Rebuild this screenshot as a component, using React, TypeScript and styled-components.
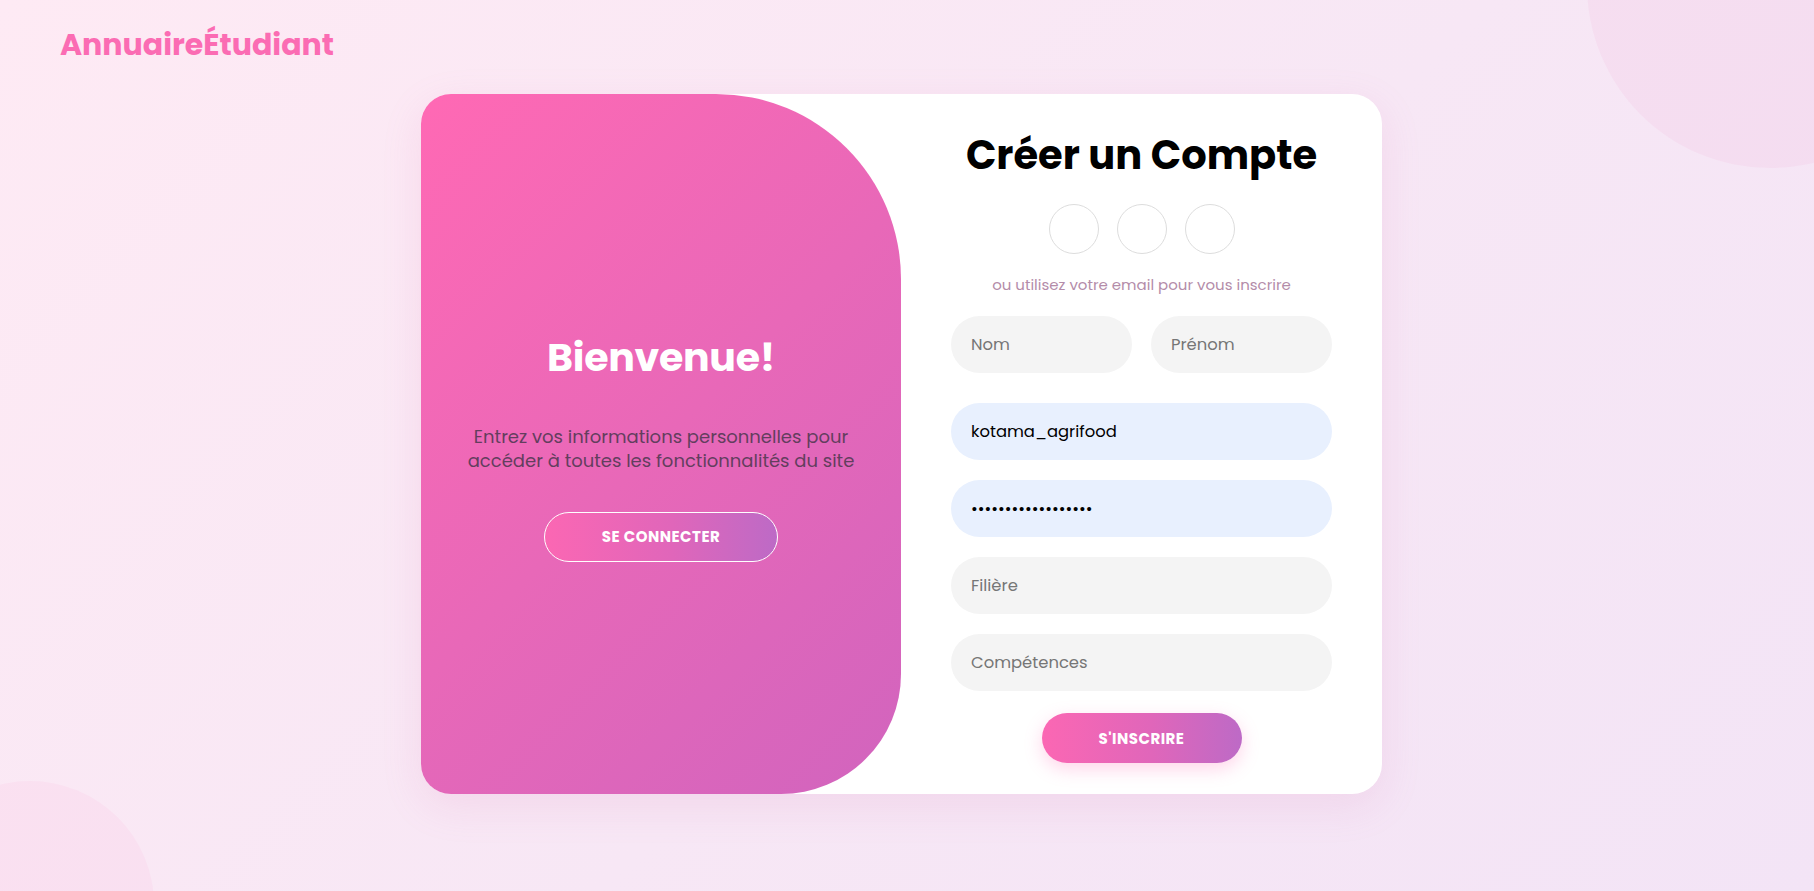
import React from "react";
import styled, { createGlobalStyle } from "styled-components";

const GlobalStyle = createGlobalStyle`
  * { box-sizing: border-box; }
  html, body {
    margin: 0;
    padding: 0;
    height: 100%;
  }
  body {
    font-family: "Poppins", "Inter", "Noto Sans", sans-serif;
    background: linear-gradient(135deg, #feeaf4 0%, #f7e7f5 55%, #f3e4f6 100%);
    overflow: hidden;
  }
`;

const Page = styled.div`
  position: relative;
  height: 100vh;
  display: flex;
  flex-direction: column;
  overflow: hidden;
`;

const Blob = styled.div<{ $size: number; $tint: string }>`
  position: absolute;
  width: ${(p) => p.$size}px;
  height: ${(p) => p.$size}px;
  border-radius: 50%;
  background: ${(p) => p.$tint};
  pointer-events: none;
`;

const BlobTopRight = styled(Blob)`
  left: 1587px;
  top: -198px;
`;

const BlobBottomLeft = styled(Blob)`
  left: -94px;
  top: 781px;
`;

const Header = styled.header`
  position: relative;
  padding: 22px 60px 0;
  height: 64px;
`;

const Logo = styled.div`
  font-size: 30px;
  font-weight: 700;
  color: #fb6cb3;
  line-height: 45px;
`;

const Main = styled.main`
  position: relative;
  display: flex;
  justify-content: center;
  padding: 30px 11px 0 0;
`;

const Card = styled.div`
  width: 961px;
  height: 700px;
  background: #ffffff;
  border-radius: 30px;
  overflow: hidden;
  display: grid;
  grid-template-columns: 480px 1fr;
  box-shadow: 0 12px 40px rgba(220, 110, 180, 0.14);
`;

const WelcomePanel = styled.section`
  background: linear-gradient(135deg, #ff69b4 0%, #e868b8 50%, #d164be 100%);
  border-radius: 0 185px 120px 0;
  display: flex;
  flex-direction: column;
  align-items: center;
  justify-content: center;
  text-align: center;
  padding: 7px 20px 0;
`;

const WelcomeTitle = styled.h1`
  margin: 0;
  font-size: 39.5px;
  line-height: 48px;
  font-weight: 700;
  color: #ffffff;
  letter-spacing: -0.3px;
`;

const WelcomeText = styled.p`
  margin: 43px 0 0;
  font-size: 18px;
  line-height: 24px;
  color: #633e5e;
`;

const GhostButton = styled.button`
  margin-top: 39px;
  width: 234px;
  height: 50px;
  border-radius: 25px;
  border: 1px solid #ffffff;
  background: linear-gradient(90deg, #fb67b3 0%, #e066ba 55%, #bd6ac6 100%);
  color: #ffffff;
  font-family: inherit;
  font-size: 15px;
  font-weight: 700;
  letter-spacing: 0.5px;
  text-transform: uppercase;
  cursor: pointer;
`;

const FormPanel = styled.form`
  display: flex;
  flex-direction: column;
  align-items: center;
  justify-content: center;
  padding: 5px 50px 0;
`;

const FormTitle = styled.h2`
  margin: 0;
  font-size: 40px;
  line-height: 50px;
  font-weight: 700;
  color: #000000;
`;

const SocialRow = styled.div`
  margin-top: 24px;
  display: flex;
  gap: 18px;
`;

const SocialCircle = styled.a`
  width: 50px;
  height: 50px;
  border-radius: 50%;
  border: 1px solid #dddddd;
  display: block;
`;

const Hint = styled.span`
  margin-top: 21px;
  font-size: 15px;
  line-height: 20px;
  color: #b48ca9;
`;

const FieldRow = styled.div`
  margin-top: 21px;
  width: 100%;
  display: grid;
  grid-template-columns: 1fr 1fr;
  gap: 19px;
`;

const FieldStack = styled.div`
  margin-top: 30px;
  width: 100%;
  display: flex;
  flex-direction: column;
  gap: 20px;
`;

const Field = styled.input<{ $filled?: boolean }>`
  width: 100%;
  height: 57px;
  border: none;
  outline: none;
  border-radius: 29px;
  padding: 0 20px;
  background: ${(p) => (p.$filled ? "#e8f0fe" : "#f4f4f4")};
  font-family: inherit;
  font-size: 16.4px;
  color: #000000;
  &::placeholder {
    color: #767676;
  }
`;

const SubmitButton = styled.button`
  margin-top: 22px;
  width: 200px;
  height: 50px;
  border: none;
  border-radius: 25px;
  background: linear-gradient(90deg, #fb67b3 0%, #e066ba 55%, #bd6ac6 100%);
  color: #ffffff;
  font-family: inherit;
  font-size: 15px;
  font-weight: 700;
  letter-spacing: 0.5px;
  text-transform: uppercase;
  box-shadow: 0 6px 18px rgba(255, 105, 180, 0.28);
  cursor: pointer;
`;

export default function App() {
  return (
    <>
      <GlobalStyle />
      <Page>
        <BlobTopRight $size={366} $tint="rgba(235, 110, 185, 0.07)" />
        <BlobBottomLeft $size={248} $tint="rgba(255, 105, 180, 0.06)" />
        <Header>
          <Logo>AnnuaireÉtudiant</Logo>
        </Header>
        <Main>
          <Card>
            <WelcomePanel>
              <WelcomeTitle>Bienvenue!</WelcomeTitle>
              <WelcomeText>
                Entrez vos informations personnelles pour
                <br />
                accéder à toutes les fonctionnalités du site
              </WelcomeText>
              <GhostButton type="button">Se connecter</GhostButton>
            </WelcomePanel>
            <FormPanel onSubmit={(e) => e.preventDefault()}>
              <FormTitle>Créer un Compte</FormTitle>
              <SocialRow>
                <SocialCircle href="#" aria-label="social 1" />
                <SocialCircle href="#" aria-label="social 2" />
                <SocialCircle href="#" aria-label="social 3" />
              </SocialRow>
              <Hint>ou utilisez votre email pour vous inscrire</Hint>
              <FieldRow>
                <Field type="text" placeholder="Nom" />
                <Field type="text" placeholder="Prénom" />
              </FieldRow>
              <FieldStack>
                <Field $filled type="text" defaultValue="kotama_agrifood" />
                <Field $filled type="password" defaultValue="kotamaagrifood2024" />
                <Field type="text" placeholder="Filière" />
                <Field type="text" placeholder="Compétences" />
              </FieldStack>
              <SubmitButton type="submit">S'inscrire</SubmitButton>
            </FormPanel>
          </Card>
        </Main>
      </Page>
    </>
  );
}
